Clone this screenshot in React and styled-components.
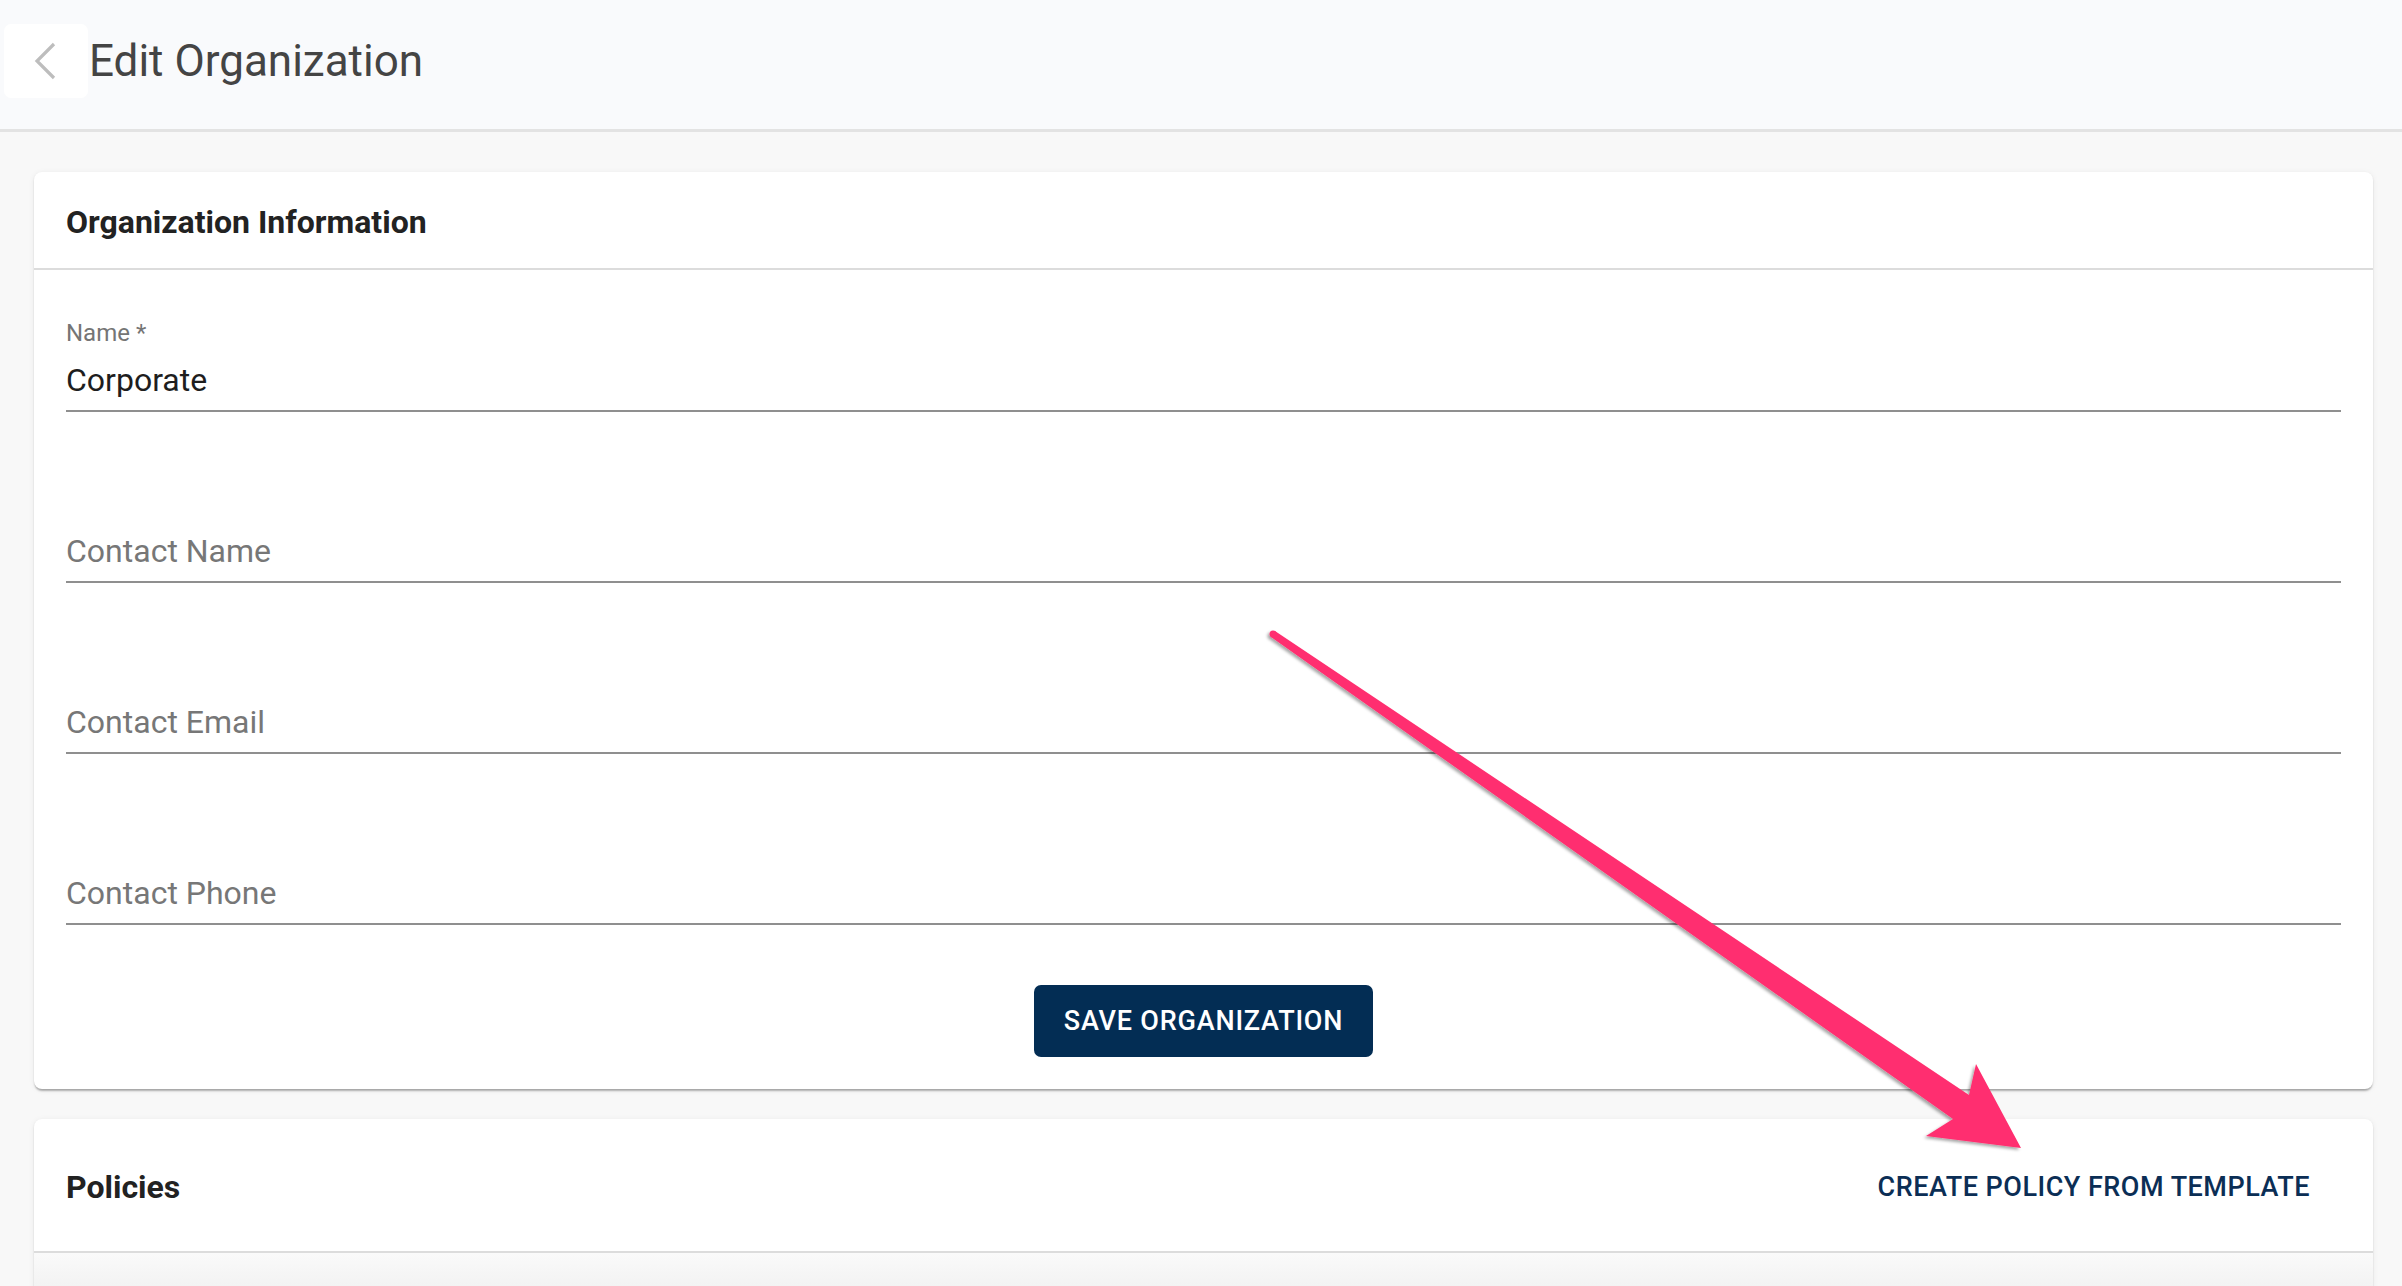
import React from 'react'
import styled, {createGlobalStyle} from "styled-components";

const Global = createGlobalStyle`
  html, body {
    margin: 0;
    padding: 0;
    background: #f8f8f8;
    font-family: Roboto, "Liberation Sans", Arial, sans-serif;
  }
`;

const Page = styled.div`
  position: relative;
  height: 1286px;
  overflow: hidden;
  background: #f8f8f8;
`;

const Header = styled.header`
  height: 129px;
  background: #f9fafc;
  border-bottom: 3px solid #e3e3e3;
  display: flex;
  align-items: center;
  padding-left: 4px;
  gap: 1px;
`;

const BackButton = styled.button`
  width: 84px;
  height: 74px;
  margin-top: -7px;
  border: none;
  border-radius: 7px;
  background: #fff;
  display: flex;
  align-items: center;
  justify-content: center;
  padding: 0;
  cursor: pointer;
`;

const Title = styled.h1`
  margin: -8px 0 0;
  font-size: 44px;
  font-weight: 400;
  color: #444;
`;

const Content = styled.main`
  padding: 40px 29px 0 34px;
  display: flex;
  flex-direction: column;
  gap: 30px;
`;

const Card = styled.section`
  background: #fff;
  border-radius: 8px;
  box-shadow: 0 3px 2px -1px rgba(0,0,0,0.25), 0 1px 2px rgba(0,0,0,0.1), 0 1px 6px rgba(0,0,0,0.06);
`;

const CardHeader = styled.div`
  height: ${({tall}) => tall ? '134px' : '98px'};
  display: flex;
  align-items: center;
  justify-content: space-between;
  padding: 0 32px;
  border-bottom: 2px solid #dcdcdc;
  box-sizing: border-box;
`;

const CardTitle = styled.h2`
  margin: 3px 0 0;
  font-size: 32px;
  font-weight: 700;
  color: #222;
`;

const Form = styled.form`
  display: flex;
  flex-direction: column;
  gap: 77px;
  padding: 48px 32px 32px;
`;

const Field = styled.label`
  display: flex;
  flex-direction: column;
`;

const Label = styled.span`
  height: 30px;
  line-height: 30px;
  font-size: 24px;
  color: #757575;
`;

const Value = styled.span`
  font-size: 32px;
  line-height: 44px;
  padding: 10px 0 8px;
  color: ${({empty}) => empty ? '#777' : '#1e1e1e'};
  border-bottom: 2px solid #8f8f8f;
`;

const Actions = styled.div`
  display: flex;
  justify-content: center;
  margin-top: -17px;
`;

const PrimaryButton = styled.button`
  width: 339px;
  height: 72px;
  border: none;
  border-radius: 7px;
  background: #032d54;
  color: #fff;
  font-family: Roboto, "Liberation Sans", Arial, sans-serif;
  font-size: 27px;
  font-weight: 500;
  letter-spacing: 0.8px;
  text-transform: uppercase;
  cursor: pointer;
`;

const TextButton = styled.button`
  border: none;
  background: none;
  padding: 12px 0;
  margin: 3px 31px 0 0;
  color: #0b2e55;
  font-family: Roboto, "Liberation Sans", Arial, sans-serif;
  font-size: 27px;
  font-weight: 500;
  letter-spacing: 0.5px;
  text-transform: uppercase;
  cursor: pointer;
`;

const CardBody = styled.div`
  height: 60px;
  background: linear-gradient(#fafafa, #ededed);
  border-radius: 0 0 8px 8px;
`;

const Overlay = styled.svg`
  position: absolute;
  left: 0;
  top: 0;
  pointer-events: none;
`;

const fields = [
  {label: 'Name *', value: 'Corporate'},
  {label: '', value: 'Contact Name', empty: true},
  {label: '', value: 'Contact Email', empty: true},
  {label: '', value: 'Contact Phone', empty: true},
];

// annotation arrow drawn on top of the screenshot
const Arrow = () => (
  <Overlay width="2402" height="1286" viewBox="0 0 2402 1286">
    <defs>
      <filter id="sh" x="-10%" y="-10%" width="120%" height="120%">
        <feDropShadow dx="-2" dy="2" stdDeviation="1.5" floodColor="#000" floodOpacity="0.35"/>
      </filter>
    </defs>
    <g filter="url(#sh)">
      <circle cx="1273" cy="634" r="3.5" fill="#ff2f6f"/>
      <polygon
        fill="#ff2f6f"
        points="1271,637 1953,1119 1926,1136 2021,1148 1976,1064 1969,1095 1275,631"
      />
    </g>
  </Overlay>
);

const App = () => {
  return (
    <Page>
      <Global/>
      <Header>
        <BackButton aria-label="Back">
          <svg width="24" height="38" viewBox="0 0 24 38">
            <polyline points="20,2 3,19 20,36" fill="none" stroke="#bdbdbd" strokeWidth="3.2"/>
          </svg>
        </BackButton>
        <Title>Edit Organization</Title>
      </Header>
      <Content>
        <Card>
          <CardHeader>
            <CardTitle>Organization Information</CardTitle>
          </CardHeader>
          <Form onSubmit={e => e.preventDefault()}>
            {fields.map(f => (
              <Field key={f.value}>
                <Label>{f.label}</Label>
                <Value empty={f.empty}>{f.value}</Value>
              </Field>
            ))}
            <Actions>
              <PrimaryButton type="submit">Save Organization</PrimaryButton>
            </Actions>
          </Form>
        </Card>
        <Card>
          <CardHeader tall>
            <CardTitle>Policies</CardTitle>
            <TextButton>Create Policy from Template</TextButton>
          </CardHeader>
          <CardBody/>
        </Card>
      </Content>
      <Arrow/>
    </Page>
  )
}

export default App
